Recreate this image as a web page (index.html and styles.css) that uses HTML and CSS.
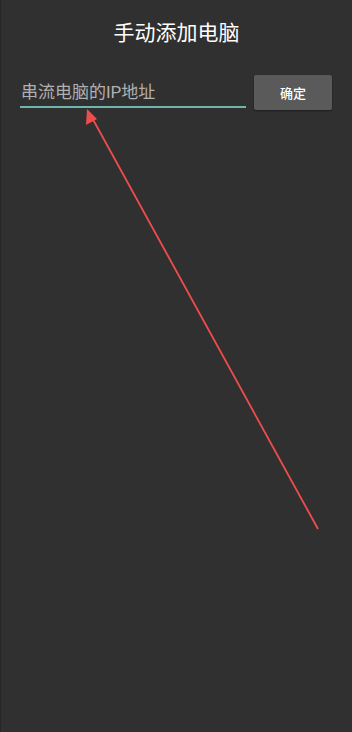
FILE: index.html
```html
<!DOCTYPE html>
<html lang="zh">
<head>
  <meta charset="UTF-8">
  <title>手动添加电脑</title>
  <link rel="stylesheet" href="styles.css">
</head>
<body>
  <div class="screen">
    <h1 class="title">手动添加电脑</h1>

    <div class="form-row">
      <div class="field">
        <span class="placeholder">串流电脑的IP地址</span>
      </div>
      <button class="ok-btn">确定</button>
    </div>

    <!-- annotation arrow -->
    <svg class="arrow" width="352" height="732" viewBox="0 0 352 732">
      <line x1="318" y1="529" x2="90" y2="114" stroke="#ef4d4d" stroke-width="1.8"/>
      <polygon points="87,109 86,125 97,119" fill="#ef4d4d"/>
    </svg>
  </div>
</body>
</html>
```

FILE: styles.css
```css
body {
  margin: 0;
  background: #303030;
  font-family: Roboto, "Noto Sans CJK SC", sans-serif;
  color: #fff;
}

.screen {
  position: relative;
  height: 732px;
  border-left: 1px solid #262626;
  box-sizing: border-box;
  overflow: hidden;
}

.title {
  margin: 0;
  padding-top: 19px;
  text-align: center;
  font-size: 21px;
  font-weight: normal;
  line-height: 28px;
  color: #fff;
}

.form-row {
  display: flex;
  align-items: center;
  margin-top: 28px;
  padding: 0 20px 0 19px;
  gap: 8px;
}

.field {
  flex: 1;
  border-bottom: 2px solid #6fb5ab;
  padding: 0 0 3px 1px;
  height: 28px;
  box-sizing: border-box;
  display: flex;
  align-items: flex-end;
  margin-top: 2px;
}

.placeholder {
  font-size: 17px;
  line-height: 22px;
  color: #b0b0b0;
}

.ok-btn {
  width: 78px;
  height: 35px;
  background: #5a5a5a;
  border: none;
  border-radius: 2px;
  color: #fff;
  font-family: Roboto, "Noto Sans CJK SC", sans-serif;
  font-size: 13px;
  font-weight: 500;
  padding-bottom: 2px;
  box-shadow: 0 1px 2px rgba(0,0,0,0.4);
}

.arrow {
  position: absolute;
  left: -1px;
  top: 0;
  pointer-events: none;
}
```
